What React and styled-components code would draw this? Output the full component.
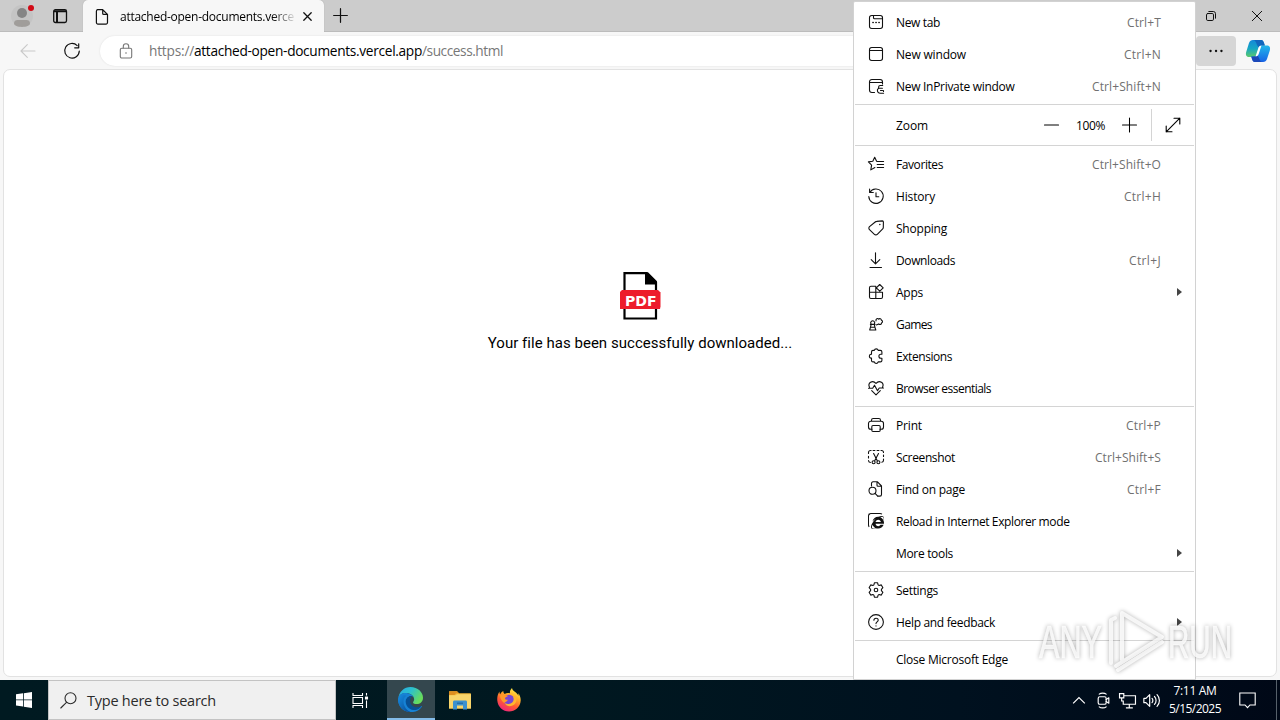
import React, { useLayoutEffect, useRef } from 'react';
import styled, { createGlobalStyle } from 'styled-components';
import { FaInternetExplorer } from 'react-icons/fa';

const GlobalStyle = createGlobalStyle`
  * { box-sizing: border-box; }
  html, body { margin: 0; padding: 0; overflow: hidden; }
  body { font-family: "Open Sans", "Noto Sans", sans-serif; color: #111; }
`;

const Screen = styled.div`
  position: relative;
  width: 1280px;
  height: 720px;
  display: flex;
  flex-direction: column;
  overflow: hidden;
  background: #f7f7f7;
`;

const Label = styled.span`
  display: inline-block;
  white-space: pre;
  flex: none;
`;

/* Text that spreads its letters to fill the given width. */
function Fit({ width, children, className }) {
  const ref = useRef(null);
  useLayoutEffect(() => {
    const el = ref.current;
    el.style.letterSpacing = '0px';
    const natural = el.getBoundingClientRect().width;
    const count = el.textContent.length;
    el.style.letterSpacing = `${(width - natural) / count}px`;
  }, [width, children]);
  return <Label ref={ref} className={className}>{children}</Label>;
}

/* ---------- icons ---------- */

const Svg = styled.svg`
  display: block;
  flex: none;
  fill: none;
  stroke: currentColor;
  stroke-width: ${(p) => p.$weight || 1.1};
  stroke-linecap: round;
  stroke-linejoin: round;
  overflow: visible;
`;

const Icon = ({ size = 16, box = 16, weight, children }) => (
  <Svg width={size} height={size} viewBox={`0 0 ${box} ${box}`} $weight={weight}>{children}</Svg>
);

const icons = {
  newTab: <><rect x="1.5" y="1.5" width="13" height="13" rx="2.2" /><path d="M5.500 1.500v2.200a1 1 0 0 0 1 1h8" /><path d="M4.900 8.500h.3M7.900 8.500h.3M10.900 8.500h.3" strokeWidth="1.500" /></>,
  window: <><rect x="1.5" y="1.5" width="13" height="13" rx="2.2" /><path d="M1.500 4.500h13" /></>,
  inPrivate: <><path d="M6.500 14.500h-2.600a2.400 2.400 0 0 1-2.400-2.400V3.900a2.400 2.400 0 0 1 2.400-2.400h8.200a2.400 2.400 0 0 1 2.400 2.400V6" /><path d="M1.500 4.500h13M14.700 7.500h-2.500a1.700 1.700 0 0 0-1.600 1.600v.4M10.900 10.200h3.500M11 10.200c-.6.5-1.600.7-1.600 1.800 0 2.200 1 3.200 3 3.200h3.200M14.500 12.500h-2M15.500 12.500v1" /></>,
  favorites: <><path d="M8.600 5.200 6.700 1.200 4.800 5.200.4 5.900l3.200 3.200-.8 4.800 4.100-2.400M9.200 5.500h6.400M9.200 8.500h6.400M9.200 11.500h6.400" /></>,
  history: <><path d="M1.600 1v3.500h3.700M1.800 4.500A7.200 7.200 0 1 1 .8 8.500M8 4.700v4h2.800" /></>,
  shopping: <><path d="M8.700 1.400 14.400.9a1 1 0 0 1 1 1l-.1 5.500a2 2 0 0 1-.6 1.400l-5.400 5.500a2 2 0 0 1-2.900 0L1.500 9.600a2 2 0 0 1 0-2.900L7.200 2a2.500 2.500 0 0 1 1.500-.6Z" /><circle cx="11.8" cy="4.4" r=".75" fill="currentColor" stroke="none" /></>,
  downloads: <><path d="M7.500.7v11.100M3.200 7.600l4.300 4.200 4.300-4.200M2 15.500h11.500" /></>,
  apps: <><path d="M7.800 2.300H2.900c-.8 0-1.400.6-1.400 1.400v9.400c0 .8.6 1.400 1.400 1.400h10.200c.8 0 1.400-.6 1.400-1.400V8.200H1.500M7.800 2.300v12.200M11.700.5l3.500 3.300-3.400 3.400-3.500-3.400Z" /></>,
  games: <><path d="M3.200 8.200a2 2 0 1 1 3 0l.7 3H2.500ZM2.500 11.200l-.8 2.800h6.100l-.9-2.800M2.400 8.400h4.600M8 4.900c-.4-2.100 1.800-3 2.700-1.700.9-1 2.700-.5 2.600.9 1.500.4 1.600 2.500.2 3-.1 1.400-1.900 2-2.800.8l-2.400 1" /></>,
  extensions: <><path d="M5 2.400h1.300a2 2 0 0 1 3.900 0h2.200c.9 0 1.500.6 1.500 1.500v2.300h-1a2 2 0 0 0 0 4h1v2.200c0 .8-.6 1.500-1.500 1.500h-2.200a2 2 0 0 1-3.900 0H5c-.9 0-1.500-.7-1.500-1.500v-2.300h-.6a2 2 0 0 1 0-3.900h.6V3.900c0-.9.600-1.500 1.500-1.500Z" /></>,
  essentials: <><path d="M1.500 7.200C-.6 3.100 4.400-.6 8 3.400 11.600-.6 16.600 3.100 14.500 7.200M3.700 10.700 8 14.900l4.300-4.200M.5 8.200h4.200l1.800-3 3 5.500L11.200 8h4.300" /></>,
  print: <><path d="M4 12.300H2.800A2.300 2.300 0 0 1 .5 10V6.500a2.300 2.300 0 0 1 2.300-2.300h10.400a2.300 2.300 0 0 1 2.300 2.300V10a2.300 2.300 0 0 1-2.300 2.300H12M3.500 4V3.200c0-1 .7-1.700 1.700-1.700h5.600c1 0 1.700.7 1.700 1.700V4" /><rect x="3.8" y="8.500" width="8.400" height="6" rx="1.2" /></>,
  screenshot: <><path d="M2.400 1.500h.7M5.100 1.500h1.800M9.100 1.500h1.800M13 1.500h.5a2 2 0 0 1 2 2M15.500 6v1.500M15.500 10v1.200a2 2 0 0 1-1.700 2M2.400 13.500a2 2 0 0 1-1.900-2M.5 9V7.200M.5 4.500v-1a2 2 0 0 1 2-2M5.600 4.500l3.700 7.200M10.500 4.500 6.700 11.700" /><circle cx="5.6" cy="13.200" r="1.500" /><circle cx="10.400" cy="13.200" r="1.500" /></>,
  find: <><path d="M3.500 5V2.400c0-.9.6-1.600 1.500-1.600h4.500L13.500 5v8.400c0 1-.7 1.700-1.600 1.700h-2M9 .8v3.500c0 .6.4 1 1 1h3.500" /><circle cx="4.500" cy="9.800" r="3.500" /><path d="m7.100 12.300 2.600 2.900" /></>,
  settings: <><path d="m6.400.8 3.200 0 .5 2.100 1 .6 2.200-.6 1.600 2.800-1.500 1.600v1.400l1.500 1.600-1.600 2.800-2.200-.6-1 .6-.5 2.100H6.400l-.5-2.100-1-.6-2.200.6-1.600-2.800 1.500-1.600V7.300L1.100 5.700l1.600-2.800 2.200.6 1-.6Z" /><circle cx="8" cy="8" r="1.800" /></>,
  help: <><circle cx="8" cy="8" r="7.4" /><path d="M5.900 6.300c0-2.800 4.300-2.800 4.300-.1 0 1.700-2.200 1.700-2.200 3.400M8 11.800v.1" /></>,
};

const IeFrame = styled.span`
  width: 15px;
  height: 15px;
  display: flex;
  align-items: flex-end;
  justify-content: flex-end;
  border: 1.4px solid #111;
  border-right-color: transparent;
  border-bottom-color: transparent;
  border-radius: 3px;
  svg { flex: none; margin: 0 -2px -2px 0; }
`;

/* ---------- title bar ---------- */

const TitleBar = styled.header`
  height: 32px;
  display: flex;
  background: #ccc;
  border-bottom: 1px solid #bcbcbc;
`;
const TitleLeft = styled.div`
  width: 83px;
  display: flex;
  align-items: center;
  padding: 1px 0 0 12px;
  gap: 16px;
  svg { overflow: visible; }
`;
const Tab = styled.div`
  width: 241px;
  height: 32px;
  display: flex;
  align-items: center;
  padding: 1px 10px 0 11px;
  background: #f7f7f7;
  border-radius: 5px 5px 0 0;
  box-shadow: 0 0 1px #999;
  clip-path: inset(0 -2px 0 -2px);
`;
const TabTitle = styled.div`
  flex: none;
  width: 175px;
  margin: 0 8px 0 10px;
  overflow: hidden;
  font-size: 12px;
  line-height: 18px;
  color: #000;
  mask-image: linear-gradient(90deg, #000 152px, transparent 177px);
`;
const NewTab = styled.div`
  display: flex;
  align-items: center;
  padding-left: 9px;
`;
const WindowButtons = styled.div`
  margin-left: auto;
  display: flex;
  align-items: center;
  gap: 36px;
  padding-right: 18px;
`;

/* ---------- toolbar ---------- */

const Toolbar = styled.div`
  height: 37px;
  flex: none;
  display: flex;
  align-items: center;
  padding: 1px 9px 0 20px;
`;
const NavIcon = styled.span`
  width: 16px;
  margin-right: 28px;
  color: ${(p) => (p.$disabled ? '#c9c9c9' : '#111')};
`;
const AddressBar = styled.div`
  width: 1068px;
  height: 30px;
  display: flex;
  align-items: center;
  margin-left: -8px;
  padding-left: 18px;
  background: #fff;
  border-radius: 15px;
  box-shadow: 0 0 2px #ddd;
  font-size: 13.7px;
  line-height: 20px;
  color: #777;
  svg { margin-right: 15px; }
`;
const Host = styled(Fit)`
  color: #000;
`;
const MoreButton = styled.div`
  width: 40px;
  height: 30px;
  margin-left: 28px;
  display: flex;
  align-items: center;
  justify-content: center;
  background: #d6d6d6;
  border-radius: 4px;
`;
const Copilot = styled.span`
  margin-left: auto;
  display: flex;
`;

/* ---------- page ---------- */

const Page = styled.main`
  flex: none;
  height: 608px;
  margin: 0 3px;
  display: flex;
  flex-direction: column;
  align-items: center;
  padding-top: 202px;
  background: #fff;
  border: 1px solid #e2e2e2;
  border-radius: 7px;
`;
const Message = styled.p`
  margin: 12px 0 0;
  font-family: Roboto, sans-serif;
  font-size: 15px;
  line-height: 22px;
  color: #000;
`;
const PdfText = styled.text`
  font-family: "DejaVu Sans", sans-serif;
  font-weight: 700;
  font-size: 14.5px;
  fill: #fff;
`;

/* ---------- menu ---------- */

const Menu = styled.nav`
  position: absolute;
  left: 853px;
  top: 1px;
  width: 343px;
  height: 679px;
  padding-top: 4px;
  background: #fff;
  border: 1px solid #d2d2d2;
  border-radius: 2px 2px 0 0;
  font-size: 12px;
  line-height: 16px;
  color: #000;
`;
const MenuText = styled(Fit)`
  padding-top: 1px;
`;
const MenuRow = styled.div`
  height: 32px;
  display: flex;
  align-items: center;
  padding: 0 13px 0 14px;
`;
const MenuIcon = styled.span`
  width: 16px;
  height: 16px;
  margin-right: 12px;
  color: #111;
`;
const Shortcut = styled(MenuText)`
  margin: 0 21px 0 auto;
  color: #707070;
`;
const Arrow = styled.i`
  margin-left: auto;
  border-left: 5px solid #444;
  border-top: 4px solid transparent;
  border-bottom: 4px solid transparent;
`;
const Rule = styled.hr`
  height: 1px;
  margin: 2px 1px;
  border: 0;
  background: #d4d4d4;
`;
const ZoomRow = styled.div`
  height: 36px;
  display: flex;
  align-items: center;
  padding-left: 42px;
`;
const ZoomControls = styled.div`
  height: 32px;
  margin-left: auto;
  display: flex;
  align-items: center;
  gap: 17px;
  padding-right: 14px;
  border-right: 1px solid #d4d4d4;
`;
const FullScreen = styled.div`
  width: 43px;
  display: flex;
  justify-content: center;
  padding-right: 2px;
`;

/* ---------- taskbar ---------- */

const Taskbar = styled.footer`
  position: relative;
  height: 40px;
  flex: none;
  margin-top: auto;
  display: flex;
  background: linear-gradient(90deg, #001a21 0, #001820 45%, #00111f 75%, #000817 100%);
  color: #fff;
`;
const TaskButton = styled.div`
  width: ${(p) => p.$width || 49}px;
  display: flex;
  align-items: center;
  justify-content: center;
  padding-right: ${(p) => p.$nudge || 0}px;
  background: ${(p) => (p.$active ? '#34474e' : 'transparent')};
  border-bottom: ${(p) => (p.$active ? '2px solid #83bce9' : 'none')};
`;
const SearchBox = styled.div`
  width: 288px;
  display: flex;
  align-items: center;
  padding: 1px 0 0 11px;
  gap: 10px;
  background: #f0f0f0;
  border: 1px solid #c3c3c3;
  color: #2b2b2b;
  font-size: 14.5px;
  line-height: 22px;
`;
const Tray = styled.div`
  margin-left: auto;
  display: flex;
  align-items: center;
  gap: 7px;
`;
const Clock = styled.div`
  width: 54px;
  display: flex;
  flex-direction: column;
  align-items: center;
  margin-left: 1px;
  font-size: 12px;
  line-height: 18px;
`;
const Notifications = styled.div`
  height: 40px;
  display: flex;
  align-items: center;
  margin-left: 10px;
  padding-right: 20px;
  border-right: 1px solid #56606a;
  margin-right: 3px;
`;

/* ---------- watermark ---------- */

const Watermark = styled.div`
  position: absolute;
  left: 1036px;
  top: 604px;
  filter: drop-shadow(0 0 2px rgba(0, 0, 0, 0.38));
  svg { display: block; overflow: visible; }
`;
const MarkText = styled.text`
  font: 400 46px "Liberation Sans", sans-serif;
  fill: rgba(255, 255, 255, 0.8);
  stroke: rgba(255, 255, 255, 0.8);
  stroke-width: 0.6;
`;

const Row = ({ icon, text, width, keys, keysWidth, arrow }) => (
  <MenuRow>
    <MenuIcon>
      {icon === 'ie' ? <IeFrame><FaInternetExplorer size={13} /></IeFrame> : icon && <Icon>{icons[icon]}</Icon>}
    </MenuIcon>
    <MenuText width={width}>{text}</MenuText>
    {keys && <Shortcut width={keysWidth}>{keys}</Shortcut>}
    {arrow && <Arrow />}
  </MenuRow>
);

const BrowserMenu = () => (
  <Menu>
    <Row icon="newTab" text="New tab" width={44} keys="Ctrl+T" keysWidth={34} />
    <Row icon="window" text="New window" width={70} keys="Ctrl+N" keysWidth={37} />
    <Row icon="inPrivate" text="New InPrivate window" width={118.5} keys="Ctrl+Shift+N" keysWidth={69} />
    <Rule />
    <ZoomRow>
      <MenuText width={32}>Zoom</MenuText>
      <ZoomControls>
        <Icon size={15}><path d="M.5 7.500h15" /></Icon>
        <MenuText width={29}>100%</MenuText>
        <Icon size={15}><path d="M.5 7.500h15M8 0v15" /></Icon>
      </ZoomControls>
      <FullScreen><Icon size={16}><path d="M9 1.200h5.800V7M14.800 1.200 1.200 14.800M1.200 9v5.800H7" /></Icon></FullScreen>
    </ZoomRow>
    <Rule />
    <Row icon="favorites" text="Favorites" width={47} keys="Ctrl+Shift+O" keysWidth={69} />
    <Row icon="history" text="History" width={39} keys="Ctrl+H" keysWidth={37} />
    <Row icon="shopping" text="Shopping" width={51} />
    <Row icon="downloads" text="Downloads" width={59} keys="Ctrl+J" keysWidth={32} />
    <Row icon="apps" text="Apps" width={27} arrow />
    <Row icon="games" text="Games" width={36} />
    <Row icon="extensions" text="Extensions" width={56} />
    <Row icon="essentials" text="Browser essentials" width={95} />
    <Rule />
    <Row icon="print" text="Print" width={26} keys="Ctrl+P" keysWidth={35} />
    <Row icon="screenshot" text="Screenshot" width={59} keys="Ctrl+Shift+S" keysWidth={66} />
    <Row icon="find" text="Find on page" width={69} keys="Ctrl+F" keysWidth={34} />
    <Row icon="ie" text="Reload in Internet Explorer mode" width={173.5} />
    <Row text="More tools" width={57} arrow />
    <Rule />
    <Row icon="settings" text="Settings" width={42} />
    <Row icon="help" text="Help and feedback" width={99} arrow />
    <Rule />
    <Row text="Close Microsoft Edge" width={112} />
  </Menu>
);

const ProfileIcon = () => (
  <svg width="24" height="22" viewBox="0 0 24 22">
    <circle cx="10" cy="11" r="11" fill="#c4c4c4" />
    <circle cx="10" cy="8" r="5" fill="#858585" />
    <path d="M2 18.500c0-2.500 1.500-3.500 3.500-3.500h9c2 0 3.500 1 3.500 3.500 0 4.500-16 4.500-16 0Z" fill="#a09d9a" />
    <circle cx="19" cy="3" r="3" fill="#d20a16" />
  </svg>
);

const CopilotIcon = () => (
  <svg width="26" height="24" viewBox="0 0 26 24">
    <defs>
      <linearGradient id="cpA" x1="0" y1="0" x2="0" y2="1"><stop offset="0" stopColor="#1489d8" /><stop offset=".5" stopColor="#16a6c4" /><stop offset="1" stopColor="#5cc96c" /></linearGradient>
      <linearGradient id="cpB" x1="0" y1="0" x2="0" y2="1"><stop offset="0" stopColor="#22b8ea" /><stop offset="1" stopColor="#1763e6" /></linearGradient>
    </defs>
    <path d="M8 1h8c2 0 2.500 1.500 3 3l.8 2.500h-2.500c-2 0-3 1-3.500 3l-1.800 6c-.5 1.500-1.500 2.500-3 2.500H4c-3 0-3.500-2.500-2.800-5L4 4c.7-2 2-3 4-3Z" fill="url(#cpA)" />
    <path d="M18 23h-8c-2 0-2.500-1.500-3-3l-.7-2.500H9c1.800 0 2.600-1 3-2.500l2-6c.5-1.500 1.500-2.500 3-2.500h5c3 0 3.500 2.500 2.800 5L22 20c-.7 2-2 3-4 3Z" fill="url(#cpB)" />
    <path d="M8 1h8c2 0 2.500 1.500 3 3l.8 2.500H17c-2 0-3 1-3.400 2L12 6c-.8-3-2-5-4-5Z" fill="#1267bd" />
    <path d="M6.300 17.500H9c1.800 0 2.600-1 3-2.500l2 4c.8 2.500 1.800 4 4 4h-8c-2 0-2.500-1.500-3-3Z" fill="#1c48b8" />
    <path d="m10.500 17.500 3-9c.5-1.300 1.500-2 3-2l-2.800 8.500c-.5 1.500-1.500 2.500-3.200 2.500Z" fill="#fff" />
  </svg>
);

const PdfIcon = () => (
  <svg width="42" height="48" viewBox="0 0 42 48">
    <path d="M5.500 1.200H27.500L37 10.500V46.500H5.500Z" fill="#fff" stroke="#000" strokeWidth="2.200" />
    <path d="M26 .2h3l9 9v3.300H26Z" fill="#000" />
    <path d="M3 18h36l2.500 2.500v14l-.5 2.500H1v-17Z" fill="#ed1c2b" />
    <PdfText x="6" y="34" textLength="31.500" lengthAdjust="spacingAndGlyphs">PDF</PdfText>
  </svg>
);

const EdgeIcon = () => (
  <svg width="25" height="25" viewBox="0 0 24 24">
    <defs>
      <linearGradient id="edA" x1="0" y1="0" x2="1" y2=".5"><stop offset="0" stopColor="#27a9e5" /><stop offset=".5" stopColor="#2cc0ce" /><stop offset="1" stopColor="#68dc5b" /></linearGradient>
      <linearGradient id="edB" x1="0" y1="0" x2="1" y2="1"><stop offset="0" stopColor="#168be1" /><stop offset="1" stopColor="#084a94" /></linearGradient>
    </defs>
    <path d="M.3 11C1 4.500 6 0 12 0c7 0 12 5 12 10.200 0 4-3 6.200-6 6.200-2.500 0-3.800-.8-3.500-1.800.2-.7 1-1.200 1-2.800C15.500 8 11 5.500 7 5.800 3.500 6 .8 8.500.3 11Z" fill="url(#edA)" />
    <path d="M.1 12C.2 8 3 5.700 7 5.700c4.300 0 8.500 2.300 8.500 6 0-2-1.500-3-3-3-6 0-6.500 12 4 12.200 3 .1 5-1.500 5.700-2.400.4-.5 1-.1.700.400A12 12 0 0 1 12 24C5 24 0 18.500.1 12Z" fill="#1682d5" />
    <path d="M12.500 8.800C8.500 9 7 12 7.500 15c.9 5.500 6.500 8 10.500 6.800 2.500-.8 4-2.300 4.600-3.500-5.500 3-11-.2-11-4.600 0-2 .6-3.800 2-4.800Z" fill="#075095" />
    <path d="M.1 12C.5 8.500 4 6.500 8 8.500 3.500 11 4.500 21 12 24 5 24 0 18.500.1 12Z" fill="url(#edB)" />
  </svg>
);

const FolderIcon = () => (
  <svg width="22" height="19" viewBox="0 0 22 19">
    <path d="M0 1.500C0 .7.500.3 1.200.3H8l2 2h11c.6 0 1 .4 1 1V17.500H0Z" fill="#f2b534" />
    <path d="M0 .3h8l1.800 2H7L5.500 4H0Z" fill="#dd8e20" />
    <path d="M0 4.200h6.500l1.500-1h14v14.300H0Z" fill="#f8d56b" />
    <path d="M4 18.500v-7.500c0-1 .6-1.600 1.500-1.600h11c1 0 1.500.6 1.500 1.600v7.500h-4v-4H8v4Z" fill="#3c91cf" />
    <path d="M8 11.500h6v1.500H8Z" fill="#266fa9" />
  </svg>
);

const FirefoxIcon = () => (
  <svg width="24" height="24" viewBox="0 0 24 24">
    <defs>
      <linearGradient id="ffA" x1=".8" y1="0" x2=".3" y2="1"><stop offset="0" stopColor="#fff44f" /><stop offset=".35" stopColor="#ffae28" /><stop offset=".65" stopColor="#ff5b32" /><stop offset="1" stopColor="#ef247c" /></linearGradient>
    </defs>
    <path d="M15 0c-2 2-2.300 3.500-2 5.300-2-.5-4-.3-5.300.7C6.500 5 6.300 4 6.300 3 4.600 4 3.800 5 3.300 6.200 2.500 5.700 2.500 4.300 2.500 3.500.8 6 0 9 .3 12.500.8 19 6 23.500 12 23.500S23.500 19 23.700 12.500c.1-3-1-5.500-2.500-7.200.2 1 .3 1.800.2 2.500C20 4 15.500 3.500 15 0Z" fill="url(#ffA)" />
    <circle cx="12" cy="12.200" r="5.500" fill="#7846d5" />
    <path d="M3 7.500c2-1 4-.8 5 .2.800-.3 2-.4 3 .2-1 .8-2.700 1-3 2.300-.2 1 1.200 1.500 3 1.500-1 2-3 2-3.500 3.300C5 14 3 10 3 7.500Z" fill="#ff9a2b" />
    <path d="M11 5.500c4-1 7.500 1.500 8 5-1-1.500-2-2-3-2 2 4-1 8-5 7.500-2 0-3-.8-3.500-1.500 1.500 5.500 11 5 12-2.500C20 8 15 4.500 11 5.500Z" fill="#ffb62f" />
  </svg>
);

const AnyRunMark = () => (
  <Watermark>
    <svg width="204" height="76" viewBox="0 0 204 76">
      <MarkText x="3" y="54" textLength="63" lengthAdjust="spacingAndGlyphs">ANY</MarkText>
      <g fill="none" stroke="#fff" strokeOpacity=".8" strokeWidth="4" strokeLinejoin="round" strokeLinecap="round">
        <path d="M75 59V16l4-2" />
        <path d="M86 56V9l40 24-46 29" />
        <path d="m82 66 44-28" />
      </g>
      <MarkText x="132" y="54" textLength="64" lengthAdjust="spacingAndGlyphs">RUN</MarkText>
    </svg>
  </Watermark>
);

export default function App() {
  return (
    <Screen>
      <GlobalStyle />
      <TitleBar>
        <TitleLeft>
          <ProfileIcon />
          <Icon size={16}><rect x="1.700" y="1.700" width="12.800" height="12.800" rx="1.700" strokeWidth="1.300" /><path d="M2 3.300h12.300M5 3v11" strokeWidth="2" strokeLinecap="butt" /></Icon>
        </TitleLeft>
        <Tab>
          <Icon size={16}><path d="M3.400.7h5.300l4.800 4.700v8.200a1.500 1.500 0 0 1-1.500 1.500H3.900a1.500 1.500 0 0 1-1.500-1.500V2.200A1.500 1.500 0 0 1 3.900.7M8.700.7V4.400a1 1 0 0 0 1 1h3.800" strokeWidth="1.200" /></Icon>
          <TabTitle><Fit width={174}>attached-open-documents.verce</Fit></TabTitle>
          <Icon size={9} box={9} weight={1.3}><path d="m.8.800 7.400 7.400M8.200.8.800 8.200" /></Icon>
        </Tab>
        <NewTab><Icon size={15}><path d="M.7 8h14.600M8 .7v14.600" strokeWidth="1.300" /></Icon></NewTab>
        <WindowButtons>
          <Icon size={10} box={10} weight={1}><rect x=".5" y="2.500" width="7" height="7" rx="1.300" /><path d="M2.800.5h4.500a2.200 2.200 0 0 1 2.200 2.200v4.500" /></Icon>
          <Icon size={10} box={10} weight={1}><path d="m.3.300 9.400 9.400M9.700.3.300 9.700" /></Icon>
        </WindowButtons>
      </TitleBar>

      <Toolbar>
        <NavIcon $disabled><Icon><path d="M15 8H1M7.300 1.700 1 8l6.300 6.300" /></Icon></NavIcon>
        <NavIcon><Icon><path d="M13.200 2.600A7.300 7.300 0 1 0 15.300 8M14.700.8v4h-4" strokeWidth="1.200" /></Icon></NavIcon>
        <AddressBar>
          <Icon><rect x="2.300" y="5.200" width="11.400" height="9.800" rx="1.500" /><path d="M5.300 5V3.500a2.700 2.700 0 0 1 5.400 0V5" /><circle cx="8" cy="10" r=".8" fill="currentColor" stroke="none" /></Icon>
          <Fit width={45}>https://</Fit>
          <Host width={228}>attached-open-documents.vercel.app</Host>
          <Fit width={81}>/success.html</Fit>
        </AddressBar>
        <MoreButton><Icon size={16}><path d="M2.500 8h.1M8 8h.1M13.400 8h.1" strokeWidth="2.300" /></Icon></MoreButton>
        <Copilot><CopilotIcon /></Copilot>
      </Toolbar>

      <Page>
        <PdfIcon />
        <Message><Fit width={304}>Your file has been successfully downloaded...</Fit></Message>
      </Page>

      <Taskbar>
        <TaskButton $width={48}>
          <svg width="16" height="16" viewBox="0 0 16 16" fill="#fff"><path d="M0 2.300 7 1.300v6.200H0ZM7.800 1.200 16 0v7.500H7.800ZM0 8.300h7v6.200L0 13.500ZM7.800 8.300H16V16l-8.200-1.200Z" /></svg>
        </TaskButton>
        <SearchBox>
          <Icon size={17} box={17}><circle cx="10.500" cy="6.300" r="5.500" /><path d="M6.500 10.300.8 16" /></Icon>
          <Fit width={129}>Type here to search</Fit>
        </SearchBox>
        <TaskButton $width={51} $nudge={2}>
          <Icon size={17} box={17}><path d="M1 1v2.500h9.500V1M1 16v-2.500h9.500V16M1 5.500h9.500v6H1ZM14.500 1v2.500M14.500 8.500V16" strokeLinecap="butt" strokeLinejoin="miter" /><rect x="13.500" y="5" width="2" height="2" fill="currentColor" /></Icon>
        </TaskButton>
        <TaskButton $width={48} $active $nudge={1}><EdgeIcon /></TaskButton>
        <TaskButton><FolderIcon /></TaskButton>
        <TaskButton><FirefoxIcon /></TaskButton>
        <Tray>
          <Icon size={17}><path d="m2 10.700 5.500-5.500 5.500 5.500" strokeLinecap="butt" strokeLinejoin="miter" /></Icon>
          <Icon size={17}><rect x="3" y="4.500" width="7.500" height="7" rx="1.500" /><path d="m10.500 7 2.500-1.500v5L10.500 9M4 2c1.500-1.300 5-1.300 6.500 0M4 14c1.500 1.300 5 1.300 6.500 0" /></Icon>
          <Icon size={17}><path d="M5 3.500h10.500v8H4V8M9.700 11.500V15M6.500 15h6.500M.5 1.500h4v4h-4ZM2.500 5.500v3H4" strokeLinecap="butt" strokeLinejoin="miter" /></Icon>
          <Icon size={17}><path d="M.8 6h2l3.500-3.500v11L2.800 10h-2ZM8.500 6c1 1 1 3 0 4M10.800 4.200c2 2 2 5.500 0 7.500M13.200 2.500c3 3 3 8 0 11" /></Icon>
          <Clock><Fit width={43}>7:11 AM</Fit><Fit width={52}>5/15/2025</Fit></Clock>
          <Notifications><Icon size={17} box={17}><path d="M.8 1h15.400v12H11l-2.500 2.700L6 13H.8Z" strokeLinejoin="miter" /></Icon></Notifications>
        </Tray>
      </Taskbar>

      <BrowserMenu />
      <AnyRunMark />
    </Screen>
  );
}
